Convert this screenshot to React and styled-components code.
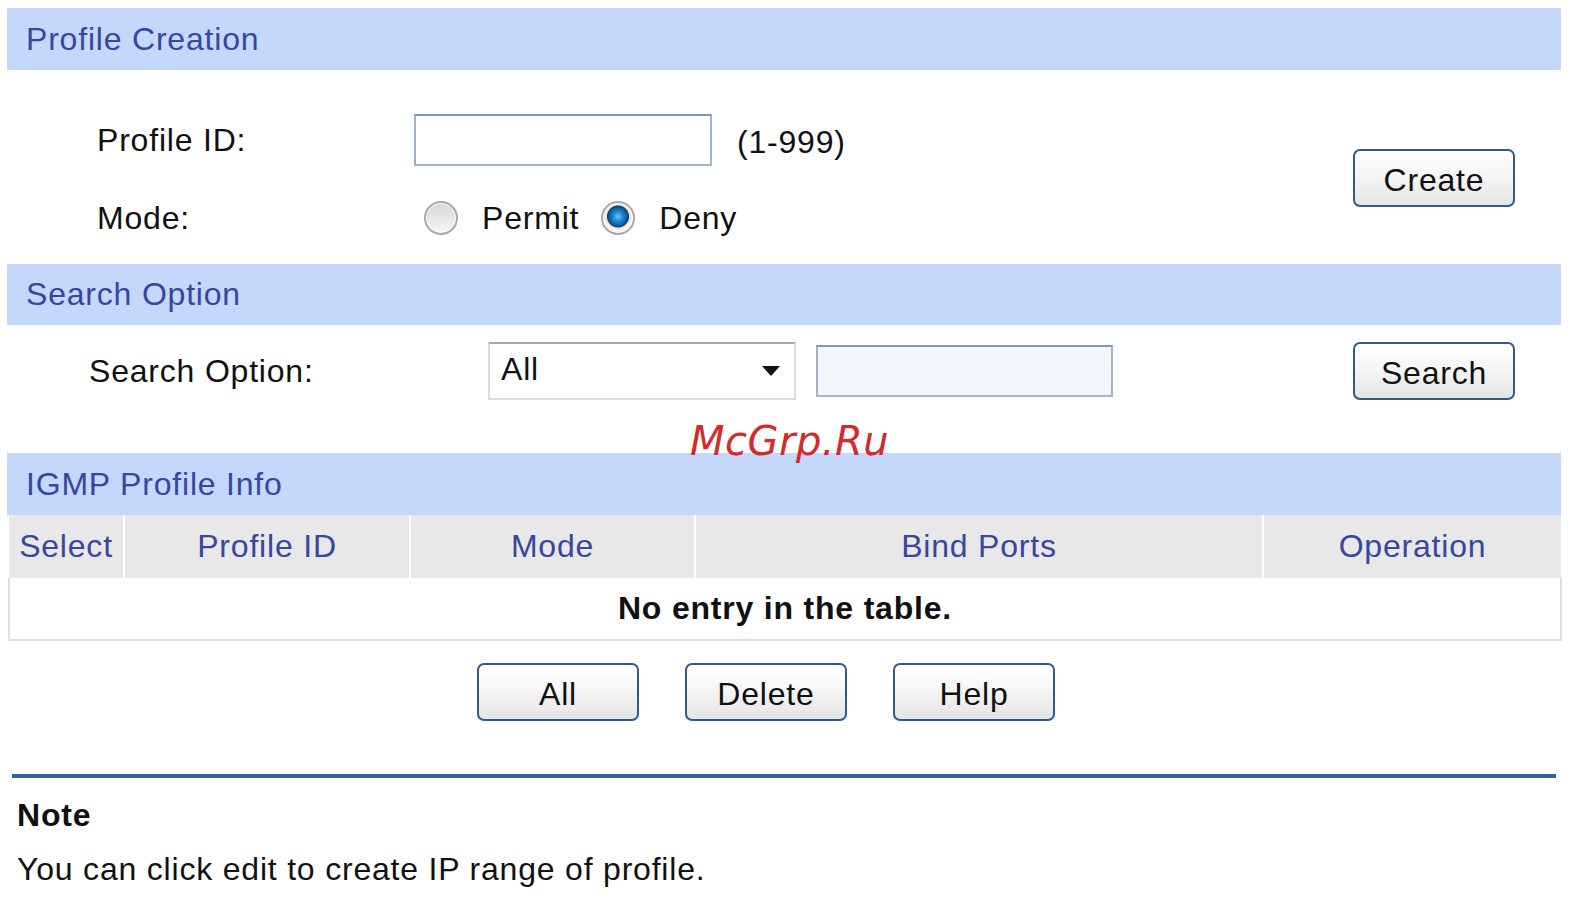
import React from "react";
import styled, { createGlobalStyle } from "styled-components";

const Global = createGlobalStyle`
  html, body { margin: 0; padding: 0; background: #fff; }
  body { font-family: "Liberation Sans", Arial, sans-serif; }
  * { box-sizing: border-box; }
`;

const Page = styled.div`
  position: relative;
  width: 1587px;
  height: 897px;
  padding: 8px 26px 0 7px;
  overflow: hidden;
  font-family: "Liberation Sans", Arial, sans-serif;
  font-size: 32px;
  letter-spacing: 0.8px;
  color: #111;
`;

const Bar = styled.div`
  height: ${(p) => p.$h || 62}px;
  background: #c4d8fc;
  color: #3846a0;
  display: flex;
  align-items: center;
  padding-left: 19px;
  font-size: 32px;
`;

const FormBlock = styled.div`
  display: flex;
  align-items: center;
  height: 194px;
  padding: 30px 46px 8px 90px;
`;

const Rows = styled.div`
  flex: 1;
  display: flex;
  flex-direction: column;
`;

const Row = styled.div`
  display: flex;
  align-items: center;
  height: ${(p) => p.$h}px;
`;

const Label = styled.div`
  width: ${(p) => p.$w}px;
  flex-shrink: 0;
`;

const TextInput = styled.div`
  width: ${(p) => p.$w}px;
  height: 52px;
  border: 2px solid #9fb3cf;
  border-top-color: #7f96b8;
  background: ${(p) => p.$bg || "#fff"};
  flex-shrink: 0;
`;

const Hint = styled.span`
  margin-left: 25px;
  margin-top: 4px;
`;

const RadioGroup = styled.div`
  display: flex;
  align-items: center;
  padding-left: 10px;
`;

const Radio = styled.span`
  width: 34px;
  height: 34px;
  border-radius: 50%;
  flex-shrink: 0;
  border: 2px solid #a9a9a9;
  background: ${(p) =>
    p.$checked
      ? "radial-gradient(circle at 50% 45%, #6cc3f5 0, #1b86d0 5px, #0d5c9e 9px, #1e3a5a 10.5px, #e6e6e6 11.5px, #f4f4f4 14px)"
      : "linear-gradient(#d6d6d6, #f7f7f7)"};
  box-shadow: inset 0 0 0 1px #fff;
`;

const RadioText = styled.span`
  margin-left: 24px;
  margin-right: ${(p) => p.$mr || 0}px;
`;

const Button = styled.button`
  width: 162px;
  height: 58px;
  flex-shrink: 0;
  border: 2px solid #2f5b8c;
  border-radius: 7px;
  background: linear-gradient(#ffffff 0%, #f6f6f6 45%, #e4e4e4 100%);
  font-family: "Liberation Sans", Arial, sans-serif;
  font-size: 32px;
  letter-spacing: 0.8px;
  color: #111;
  padding: 0;
  padding-top: 4px;
  cursor: pointer;
`;

const SearchRow = styled.div`
  display: flex;
  align-items: center;
  height: 128px;
  padding: 17px 46px 53px 82px;
`;

const Select = styled.div`
  width: 308px;
  height: 58px;
  border: 2px solid #dcdcdc;
  border-top-color: #a9a9a9;
  display: flex;
  align-items: center;
  justify-content: space-between;
  padding: 0 14px 4px 11px;
  flex-shrink: 0;
`;

const Caret = styled.span`
  width: 0;
  height: 0;
  border-left: 9px solid transparent;
  border-right: 9px solid transparent;
  border-top: 10px solid #111;
  margin-top: 4px;
`;

const Spacer = styled.div`
  flex: 1;
`;

const Gap = styled.div`
  width: ${(p) => p.$w}px;
  flex-shrink: 0;
`;

const Table = styled.table`
  width: 1552px;
  margin-left: 1px;
  border-collapse: collapse;
  table-layout: fixed;
`;

const Th = styled.th`
  height: 63px;
  background: #e8e8e8;
  color: #3846a0;
  font-weight: normal;
  font-size: 32px;
  text-align: center;
  border-left: 2px solid #fff;
  padding: 0;
  &:first-child { border-left: none; }
`;

const Td = styled.td`
  height: 62px;
  background: #fff;
  border: 2px solid #dedede;
  border-top: none;
  text-align: center;
  font-weight: bold;
  padding: 0;
`;

const ButtonRow = styled.div`
  display: flex;
  gap: 46px;
  padding: 22px 0 0 470px;
  height: 133px;
`;

const Divider = styled.div`
  height: 4px;
  margin: 0 5px;
  background: #2c6798;
`;

const NoteTitle = styled.div`
  font-weight: bold;
  padding: 18px 0 0 10px;
  line-height: 38px;
`;

const NoteText = styled.div`
  padding: 16px 0 0 10px;
  line-height: 38px;
`;

const Watermark = styled.div`
  position: absolute;
  left: 690px;
  top: 418px;
  font-family: "DejaVu Sans", sans-serif;
  font-style: italic;
  font-size: 40px;
  letter-spacing: 0.5px;
  color: #d42a2a;
  pointer-events: none;
`;

export default function App() {
  return (
    <>
      <Global />
      <Page>
        <Bar>Profile Creation</Bar>
        <FormBlock>
          <Rows>
            <Row $h={80}>
              <Label $w={317}>Profile ID:</Label>
              <TextInput $w={298} />
              <Hint>(1-999)</Hint>
            </Row>
            <Row $h={76}>
              <Label $w={317}>Mode:</Label>
              <RadioGroup>
                <Radio />
                <RadioText $mr={22}>Permit</RadioText>
                <Radio $checked />
                <RadioText>Deny</RadioText>
              </RadioGroup>
            </Row>
          </Rows>
          <Button>Create</Button>
        </FormBlock>

        <Bar $h={61}>Search Option</Bar>
        <SearchRow>
          <Label $w={399}>Search Option:</Label>
          <Select>
            <span>All</span>
            <Caret />
          </Select>
          <Gap $w={20} />
          <TextInput $w={297} $bg="#f3f6fb" />
          <Spacer />
          <Button>Search</Button>
        </SearchRow>

        <Bar>IGMP Profile Info</Bar>
        <Table>
          <colgroup>
            <col style={{ width: 115 }} />
            <col style={{ width: 286 }} />
            <col style={{ width: 285 }} />
            <col style={{ width: 568 }} />
            <col style={{ width: 298 }} />
          </colgroup>
          <thead>
            <tr>
              <Th>Select</Th>
              <Th>Profile ID</Th>
              <Th>Mode</Th>
              <Th>Bind Ports</Th>
              <Th>Operation</Th>
            </tr>
          </thead>
          <tbody>
            <tr>
              <Td colSpan={5}>No entry in the table.</Td>
            </tr>
          </tbody>
        </Table>

        <ButtonRow>
          <Button>All</Button>
          <Button>Delete</Button>
          <Button>Help</Button>
        </ButtonRow>

        <Divider />
        <NoteTitle>Note</NoteTitle>
        <NoteText>You can click edit to create IP range of profile.</NoteText>

        <Watermark>McGrp.Ru</Watermark>
      </Page>
    </>
  );
}
